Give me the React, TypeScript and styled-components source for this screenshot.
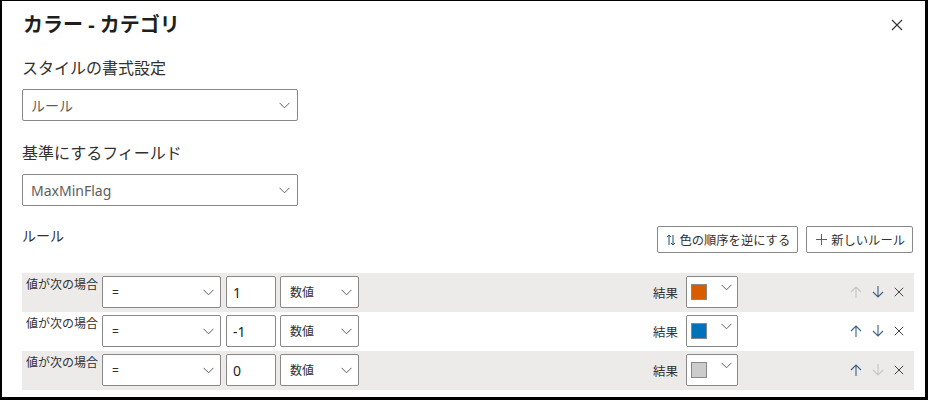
import * as React from 'react';
import styled, { createGlobalStyle } from 'styled-components';

const GlobalStyle = createGlobalStyle`
    html, body {
        margin: 0;
        padding: 0;
        background: #000;
    }
    body {
        font-family: "Segoe UI", "Noto Sans", "Noto Sans CJK JP", sans-serif;
        color: #323130;
    }
    * {
        box-sizing: border-box;
    }
`;

const Panel = styled.div`
    width: 923px;
    height: 396px;
    margin: 1px 3px 3px 2px;
    background: #fff;
    padding: 10px 11px 0 20px;
    overflow: hidden;
`;

const Header = styled.div`
    display: flex;
    justify-content: space-between;
    align-items: center;
    height: 28px;
`;

const Title = styled.h1`
    margin: 0;
    font-size: 20px;
    font-weight: 700;
    line-height: 28px;
    color: #201f1e;
    padding-left: 1px;
`;

const IconButton = styled.button`
    display: flex;
    align-items: center;
    justify-content: center;
    width: 20px;
    height: 20px;
    margin-right: 7px;
    padding: 0;
    border: none;
    background: transparent;
    cursor: pointer;
`;

const Field = styled.div<{ $top: number }>`
    display: flex;
    flex-direction: column;
    margin-top: ${(p) => p.$top}px;
`;

const Label = styled.div`
    font-size: 16px;
    line-height: 22px;
    color: #323130;
    margin-bottom: 10px;
`;

const Dropdown = styled.div`
    display: flex;
    align-items: center;
    justify-content: space-between;
    width: 276px;
    height: 32px;
    border: 1px solid #8a8886;
    border-radius: 2px;
    padding: 0 7px 0 8px;
    font-size: 14px;
    color: #605e5c;
`;

const RulesHeader = styled.div`
    display: flex;
    justify-content: space-between;
    align-items: flex-start;
    margin-top: 20px;
`;

const SectionTitle = styled.div`
    font-size: 14px;
    line-height: 20px;
    color: #323130;
`;

const Actions = styled.div`
    display: flex;
    gap: 8px;
    padding-right: 1px;
`;

const ActionButton = styled.button`
    display: flex;
    align-items: center;
    gap: 4px;
    height: 27px;
    padding: 0 7px 0 9px;
    border: 1px solid #8a8886;
    border-radius: 2px;
    background: #fff;
    font-family: inherit;
    font-size: 12.3px;
    color: #323130;
    cursor: pointer;
`;

const RuleList = styled.div`
    display: flex;
    flex-direction: column;
    margin-top: 20px;
`;

const RuleRow = styled.div<{ $shaded: boolean }>`
    display: flex;
    align-items: center;
    height: 39px;
    padding: 0 10px 1px 4px;
    background: ${(p) => (p.$shaded ? '#edebe9' : '#fff')};
`;

const RowLabel = styled.div`
    align-self: flex-start;
    margin-top: 4px;
    width: 76px;
    font-size: 12px;
    line-height: 16px;
    color: #323130;
    white-space: nowrap;
`;

const Select = styled.div<{ $width: number }>`
    display: flex;
    align-items: center;
    justify-content: space-between;
    width: ${(p) => p.$width}px;
    height: 32px;
    margin-right: 5px;
    border: 1px solid #8a8886;
    border-radius: 2px;
    background: #fff;
    padding: 0 6px 0 9px;
    font-size: 12px;
    color: #323130;
`;

const ValueInput = styled.input`
    width: 50px;
    height: 32px;
    margin-right: 4px;
    border: 1px solid #8a8886;
    border-radius: 2px;
    padding: 0 6px;
    font-family: inherit;
    font-size: 14px;
    color: #201f1e;
    outline: none;
`;

const ResultGroup = styled.div`
    display: flex;
    align-items: center;
    width: 251px;
    margin-left: auto;
`;

const ResultLabel = styled.div`
    font-size: 12.5px;
    margin-right: 8px;
    color: #323130;
`;

const ColorPicker = styled.div`
    display: flex;
    align-items: flex-start;
    justify-content: space-between;
    width: 52px;
    height: 32px;
    border: 1px solid #8a8886;
    border-radius: 2px;
    background: #fff;
    padding: 7px 5px 0 4px;
`;

const Swatch = styled.div<{ $color: string }>`
    width: 16px;
    height: 16px;
    border: 1px solid #8a8886;
    background: ${(p) => p.$color};
`;

const RowTools = styled.div`
    display: flex;
    align-items: center;
    gap: 10px;
    margin-left: auto;
`;

const Chevron = ({ width = 11 }: { width?: number }) => (
    <svg width={width} height="7" viewBox="0 0 11 7" fill="none">
        <path d="M0.5 0.8 L5.5 5.8 L10.5 0.8" stroke="#605e5c" strokeWidth="1" />
    </svg>
);

const CloseIcon = ({ size = 12, color = '#323130' }: { size?: number; color?: string }) => (
    <svg width={size} height={size} viewBox="0 0 12 12" fill="none">
        <path d="M1 1 L11 11 M11 1 L1 11" stroke={color} strokeWidth="1.1" />
    </svg>
);

const ArrowIcon = ({ dir, enabled }: { dir: 'up' | 'down'; enabled: boolean }) => {
    const color = enabled ? '#3d6186' : '#c8c6c4';
    const d = dir === 'up' ? 'M6 1 V12 M1 6 L6 1 L11 6' : 'M6 0 V11 M1 6 L6 11 L11 6';
    return (
        <svg width="12" height="12" viewBox="0 0 12 12" fill="none">
            <path d={d} stroke={color} strokeWidth="1.1" />
        </svg>
    );
};

const SortIcon = () => (
    <svg width="8" height="12" viewBox="0 0 8 12" fill="none">
        <path d="M2 1 V11 M0 3 L2 1 L4 3" stroke="#1f4e7a" strokeWidth="1" />
        <path d="M6 1 V11 M4 9 L6 11 L8 9" stroke="#1f4e7a" strokeWidth="1" />
    </svg>
);

const PlusIcon = () => (
    <svg width="11" height="11" viewBox="0 0 11 11" fill="none">
        <path d="M5.5 0 V11 M0 5.5 H11" stroke="#605e5c" strokeWidth="1" />
    </svg>
);

type Rule = {
    value: string;
    color: string;
};

const rules: Rule[] = [
    { value: '1', color: '#d85c00' },
    { value: '-1', color: '#0072bb' },
    { value: '0', color: '#cccccc' },
];

export default function App() {
    return (
        <>
            <GlobalStyle />
            <Panel>
                <Header>
                    <Title>カラー - カテゴリ</Title>
                    <IconButton aria-label="閉じる">
                        <CloseIcon />
                    </IconButton>
                </Header>

                <Field $top={18}>
                    <Label>スタイルの書式設定</Label>
                    <Dropdown>
                        ルール
                        <Chevron />
                    </Dropdown>
                </Field>

                <Field $top={21}>
                    <Label>基準にするフィールド</Label>
                    <Dropdown>
                        MaxMinFlag
                        <Chevron />
                    </Dropdown>
                </Field>

                <RulesHeader>
                    <SectionTitle>ルール</SectionTitle>
                    <Actions>
                        <ActionButton>
                            <SortIcon />
                            色の順序を逆にする
                        </ActionButton>
                        <ActionButton>
                            <PlusIcon />
                            新しいルール
                        </ActionButton>
                    </Actions>
                </RulesHeader>

                <RuleList>
                    {rules.map((rule, i) => (
                        <RuleRow key={i} $shaded={i % 2 === 0}>
                            <RowLabel>値が次の場合</RowLabel>
                            <Select $width={119}>
                                =
                                <Chevron />
                            </Select>
                            <ValueInput defaultValue={rule.value} />
                            <Select $width={79}>
                                数値
                                <Chevron />
                            </Select>
                            <ResultGroup>
                                <ResultLabel>結果</ResultLabel>
                                <ColorPicker>
                                    <Swatch $color={rule.color} />
                                    <Chevron />
                                </ColorPicker>
                                <RowTools>
                                    <ArrowIcon dir="up" enabled={i > 0} />
                                    <ArrowIcon dir="down" enabled={i < rules.length - 1} />
                                    <CloseIcon size={10} color="#323130" />
                                </RowTools>
                            </ResultGroup>
                        </RuleRow>
                    ))}
                </RuleList>
            </Panel>
        </>
    );
}
